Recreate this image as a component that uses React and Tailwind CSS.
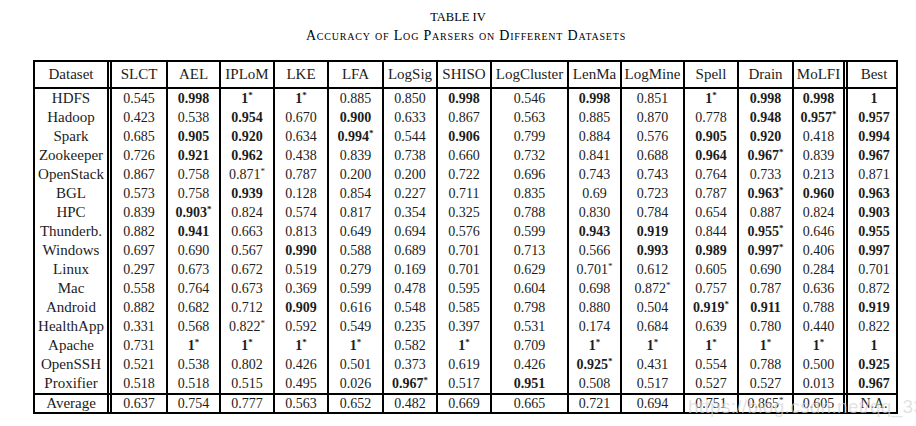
const cols = ["Dataset", "SLCT", "AEL", "IPLoM", "LKE", "LFA", "LogSig", "SHISO", "LogCluster", "LenMa", "LogMine", "Spell", "Drain", "MoLFI", "Best"];

// "!" prefix = bold, "*" suffix = star
const rows = [
  ["HDFS", "0.545", "!0.998", "!1*", "!1*", "0.885", "0.850", "!0.998", "0.546", "!0.998", "0.851", "!1*", "!0.998", "!0.998", "!1"],
  ["Hadoop", "0.423", "0.538", "!0.954", "0.670", "!0.900", "0.633", "0.867", "0.563", "0.885", "0.870", "0.778", "!0.948", "!0.957*", "!0.957"],
  ["Spark", "0.685", "!0.905", "!0.920", "0.634", "!0.994*", "0.544", "!0.906", "0.799", "0.884", "0.576", "!0.905", "!0.920", "0.418", "!0.994"],
  ["Zookeeper", "0.726", "!0.921", "!0.962", "0.438", "0.839", "0.738", "0.660", "0.732", "0.841", "0.688", "!0.964", "!0.967*", "0.839", "!0.967"],
  ["OpenStack", "0.867", "0.758", "0.871*", "0.787", "0.200", "0.200", "0.722", "0.696", "0.743", "0.743", "0.764", "0.733", "0.213", "0.871"],
  ["BGL", "0.573", "0.758", "!0.939", "0.128", "0.854", "0.227", "0.711", "0.835", "0.69", "0.723", "0.787", "!0.963*", "!0.960", "!0.963"],
  ["HPC", "0.839", "!0.903*", "0.824", "0.574", "0.817", "0.354", "0.325", "0.788", "0.830", "0.784", "0.654", "0.887", "0.824", "!0.903"],
  ["Thunderb.", "0.882", "!0.941", "0.663", "0.813", "0.649", "0.694", "0.576", "0.599", "!0.943", "!0.919", "0.844", "!0.955*", "0.646", "!0.955"],
  ["Windows", "0.697", "0.690", "0.567", "!0.990", "0.588", "0.689", "0.701", "0.713", "0.566", "!0.993", "!0.989", "!0.997*", "0.406", "!0.997"],
  ["Linux", "0.297", "0.673", "0.672", "0.519", "0.279", "0.169", "0.701", "0.629", "0.701*", "0.612", "0.605", "0.690", "0.284", "0.701"],
  ["Mac", "0.558", "0.764", "0.673", "0.369", "0.599", "0.478", "0.595", "0.604", "0.698", "0.872*", "0.757", "0.787", "0.636", "0.872"],
  ["Android", "0.882", "0.682", "0.712", "!0.909", "0.616", "0.548", "0.585", "0.798", "0.880", "0.504", "!0.919*", "!0.911", "0.788", "!0.919"],
  ["HealthApp", "0.331", "0.568", "0.822*", "0.592", "0.549", "0.235", "0.397", "0.531", "0.174", "0.684", "0.639", "0.780", "0.440", "0.822"],
  ["Apache", "0.731", "!1*", "!1*", "!1*", "!1*", "0.582", "!1*", "0.709", "!1*", "!1*", "!1*", "!1*", "!1*", "!1"],
  ["OpenSSH", "0.521", "0.538", "0.802", "0.426", "0.501", "0.373", "0.619", "0.426", "!0.925*", "0.431", "0.554", "0.788", "0.500", "!0.925"],
  ["Proxifier", "0.518", "0.518", "0.515", "0.495", "0.026", "!0.967*", "0.517", "!0.951", "0.508", "0.517", "0.527", "0.527", "0.013", "!0.967"],
];

const average = ["Average", "0.637", "0.754", "0.777", "0.563", "0.652", "0.482", "0.669", "0.665", "0.721", "0.694", "0.751", "0.865*", "0.605", "N.A."];

const grid = "grid grid-cols-[77px_56px_53px_54px_54px_55px_54px_54px_77px_53px_63px_54px_55px_54px_52px]";

// border for the cell at column i
const sep = (i) => {
  if (i === 0 || i === 13) return "border-r-[5px] border-double border-black";
  if (i === 14) return "";
  return "border-r-2 border-black";
};

const Value = ({ v }) => {
  let bold = false;
  let star = false;
  let t = v;
  if (t.startsWith("!")) { bold = true; t = t.slice(1); }
  if (t.endsWith("*")) { star = true; t = t.slice(0, -1); }
  return (
    <span className={bold ? "font-bold" : ""}>
      {t}
      {star && <sup className="text-[9px] -top-[0.6em]">*</sup>}
    </span>
  );
};

const Row = ({ cells, h }) => (
  <div className={grid}>
    {cells.map((c, i) => (
      <div key={i} className={`${sep(i)} ${h} flex items-center justify-center whitespace-nowrap ${i === 0 ? "text-[15px]" : "text-[14px]"}`}>
        {i === 0 ? c : <Value v={c} />}
      </div>
    ))}
  </div>
);

export default function App() {
  return (
    <div className="relative w-[916px] h-[426px] bg-white overflow-hidden text-[#1c1c1c]" style={{ fontFamily: '"Liberation Serif", "Times New Roman", serif' }}>
      <div className="h-[60px] pt-[11px] flex flex-col items-center leading-none">
        <div className="text-[12.5px] text-black">TABLE IV</div>
        <div className="mt-[5px] pl-[16px] text-[14px] tracking-[0.8px] text-black [font-variant:small-caps]">Accuracy of Log Parsers on Different Datasets</div>
      </div>

      <div className="ml-[33px] w-[865px] border-2 border-black">
        <div className={`${grid} border-b-2 border-black`}>
          {cols.map((c, i) => (
            <div key={c} className={`${sep(i)} h-[25px] flex items-center justify-center text-[15px] whitespace-nowrap`}>{c}</div>
          ))}
        </div>
        {rows.map((r) => (
          <Row key={r[0]} cells={r} h="h-[19px]" />
        ))}
        <div className="border-t-2 border-black">
          <Row cells={average} h="h-[17px]" />
        </div>
      </div>

      <div className="absolute left-[688px] top-[393px] text-[19px] text-[#d6d6d6]/70 whitespace-nowrap tracking-[0.3px]" style={{ fontFamily: '"Liberation Sans", Arial, sans-serif' }}>
        https://blog.csdn.net/qq_33871431
      </div>
    </div>
  );
}
